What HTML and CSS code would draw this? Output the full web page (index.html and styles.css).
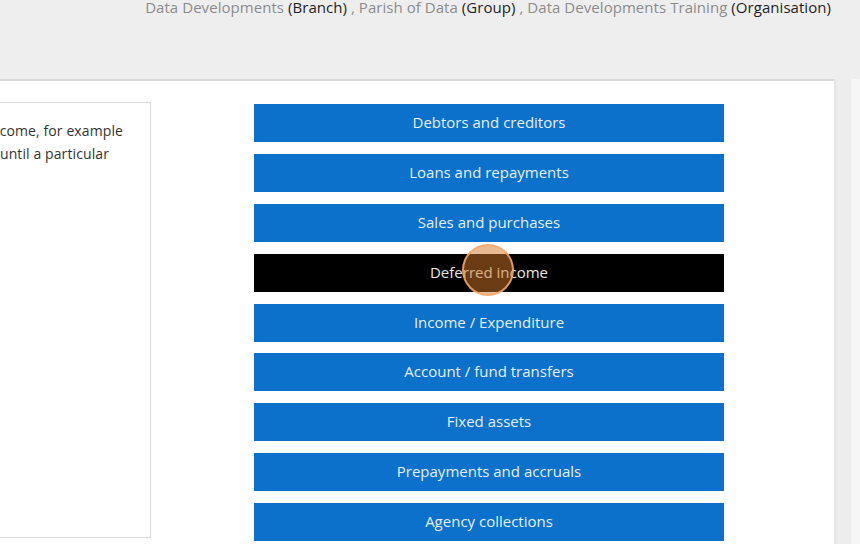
FILE: index.html
```html
<!DOCTYPE html>
<html>
<head>
    <link rel="stylesheet" href="styles.css">
</head>
<body>
    <div class="topbar">
        <span class="crumb">Data Developments</span> <span class="kind">(Branch)</span> ,
        <span class="crumb">Parish of Data</span> <span class="kind">(Group)</span> ,
        <span class="crumb">Data Developments Training</span> <span class="kind">(Organisation)</span>
    </div>

    <div class="frame">
        <div class="panel">
            <!-- 说明 -->
            <div class="info-box">
                <p class="info-text">
                    <span class="info-line">Use this to record deferred income, for example</span>
                    <span class="info-line short">when income is received but not earned until a particular</span>
                </p>
            </div>

            <!-- 类型按钮 -->
            <div class="type-list">
                <div class="type-btn">Debtors and creditors</div>
                <div class="type-btn">Loans and repayments</div>
                <div class="type-btn">Sales and purchases</div>
                <div class="type-btn active">Deferred income<span class="cursor-ring"></span></div>
                <div class="type-btn">Income / Expenditure</div>
                <div class="type-btn">Account / fund transfers</div>
                <div class="type-btn">Fixed assets</div>
                <div class="type-btn">Prepayments and accruals</div>
                <div class="type-btn">Agency collections</div>
            </div>
        </div>
        <div class="gutter"></div>
        <div class="track"></div>
    </div>
</body>
</html>
```

FILE: styles.css
```css
body {
    margin: 0;
    background: #efeeef;
    font-family: 'Open Sans', 'Noto Sans', sans-serif;
    overflow: hidden;
    height: 544px;
}

.topbar {
    height: 79px;
    text-align: right;
    padding-right: 29px;
    font-size: 15px;
    line-height: 14px;
    letter-spacing: 0.05px;
    color: #8c8c8c;
    white-space: nowrap;
}

.kind {
    color: #1e1e1e;
}

.frame {
    display: flex;
    height: 465px;
}

.panel {
    width: 834px;
    background: white;
    border-top: 2px solid #d8d7dc;
    display: flex;
    align-items: flex-start;
    padding-top: 21px;
    overflow: hidden;
}

.gutter {
    width: 15px;
    background: #eeedee;
    border-left: 2px solid #e4e3e6;
}

.track {
    flex: 1;
    background: #f6f6f6;
}

.info-box {
    flex: none;
    width: 600px;
    margin-left: -451px; /* 左侧被裁掉 */
    height: 434px;
    border: 1px solid #dcdcdc;
    background: white;
}

.info-text {
    margin: 0;
    padding: 16px 0 0 0;
    font-size: 14px;
    line-height: 23px;
    letter-spacing: 0.1px;
    color: #333;
    white-space: nowrap;
    text-align: right;
}

.info-line {
    display: block;
    padding-right: 27px;
}

.info-line.short {
    padding-right: 41px;
}

.type-list {
    flex: none;
    width: 470px;
    margin-left: 103px;
    margin-top: 2px;
    display: flex;
    flex-direction: column;
    gap: 11.9px;
}

.type-btn {
    position: relative;
    height: 38px;
    line-height: 36px;
    background: #0b71cb;
    color: #e4f0fb;
    text-align: center;
    font-size: 15px;
}

.type-btn.active {
    background: #000;
    color: #e6e6e6;
}

.cursor-ring {
    position: absolute;
    left: 208px;
    top: -10px;
    width: 48px;
    height: 48px;
    border-radius: 50%;
    background: rgba(214, 120, 40, 0.5);
    border: 2px solid rgba(244, 170, 110, 0.85);
}
```
